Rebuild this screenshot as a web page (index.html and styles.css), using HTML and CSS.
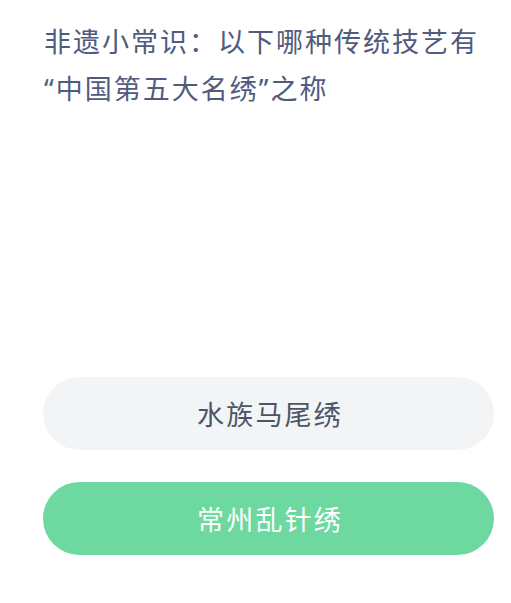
FILE: index.html
```html
<!DOCTYPE html>
<html lang="zh">
<head>
<meta charset="utf-8">
<link rel="stylesheet" href="styles.css">
</head>
<body>
<main class="quiz">
  <h1 class="question">非遗小常识：以下哪种传统技艺有“中国第五大名绣”之称</h1>
  <div class="options">
    <button class="option">水族马尾绣</button>
    <button class="option option-correct">常州乱针绣</button>
  </div>
</main>
</body>
</html>
```
FILE: styles.css
```css
html, body {
  margin: 0;
  padding: 0;
  background: #ffffff;
}
.quiz {
  width: 511px;
  height: 603px;
  box-sizing: border-box;
  padding: 18px 17px 0 43px;
  display: flex;
  flex-direction: column;
  font-family: "Noto Sans CJK SC", "Noto Sans", sans-serif;
}
.question {
  margin: 0;
  font-family: "Noto Sans", "Noto Sans CJK SC", sans-serif;
  font-size: 27px;
  font-weight: 400;
  line-height: 47px;
  letter-spacing: 2px;
  color: #505b7e;
  padding-left: 1px;
}
.options {
  margin-top: 265px;
  display: flex;
  flex-direction: column;
  gap: 32px;
}
.option {
  width: 451px;
  height: 73px;
  border: none;
  border-radius: 37px;
  background: #f3f4f6;
  color: #4b5567;
  font-family: inherit;
  font-size: 27px;
  letter-spacing: 2.2px;
  padding: 0 0 0 3px;
  cursor: pointer;
}
.option-correct {
  background: #6dd89f;
  color: #ffffff;
}
```
